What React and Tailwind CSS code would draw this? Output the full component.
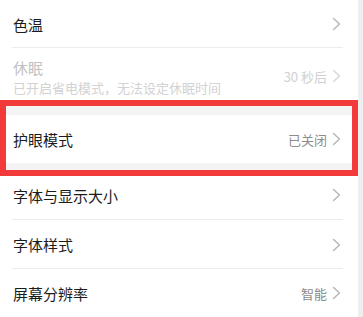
const font = { fontFamily: '"Noto Sans CJK SC", "Noto Sans", sans-serif' }

function Chevron({ light }) {
  return (
    <svg width="9" height="14" viewBox="0 0 9 14" className="shrink-0">
      <path
        d="M1.5 1.5 L7.5 7 L1.5 12.5"
        fill="none"
        stroke={light ? '#d6d6d6' : '#b5b5b5'}
        strokeWidth="1.4"
        strokeLinecap="round"
        strokeLinejoin="round"
      />
    </svg>
  )
}

function Row({ title, value, className = '', divider = true, inset = false }) {
  return (
    <div
      className={`relative flex items-center justify-between ${
        inset ? 'pl-[7px] pr-[11px]' : 'pl-[13px] pr-[17px]'
      } ${className}`}
    >
      <span className="text-[15px] text-[#1c1c1c] leading-none">{title}</span>
      <div className="flex items-center gap-[5px]">
        {value && <span className="text-[13px] text-[#8c8c8c] leading-none">{value}</span>}
        <Chevron />
      </div>
      {divider && <div className="absolute bottom-0 left-[12px] right-[15px] h-px bg-[#ececec]"></div>}
    </div>
  )
}

export default function App() {
  return (
    <div className="flex w-[363px] h-[317px] overflow-hidden bg-white" style={font}>
      <div className="w-[358px] flex flex-col">
        <Row title="色温" className="h-[48px]" />

        <div className="flex items-center justify-between pl-[13px] pr-[17px] h-[52px]">
          <div className="flex flex-col">
            <span className="text-[15px] text-[#c2c2c2] leading-none mt-[6px]">休眠</span>
            <span className="text-[13px] text-[#d2d2d2] leading-none mt-[6px]">已开启省电模式，无法设定休眠时间</span>
          </div>
          <div className="flex items-center gap-[5px] mt-[4px]">
            <span className="text-[13px] text-[#d0d0d0] leading-none">30 秒后</span>
            <Chevron light />
          </div>
        </div>

        <div className="border-[6px] border-[#f23a3a] bg-[#f3f3f3] pt-[9px] pb-[7px]">
          <Row title="护眼模式" value="已关闭" className="h-[48px] bg-white" divider={false} inset />
        </div>

        <Row title="字体与显示大小" className="h-[44px] pb-[6px]" />
        <Row title="字体样式" className="h-[49px]" />
        <Row title="屏幕分辨率" value="智能" className="h-[48px]" divider={false} />
      </div>
      <div className="flex-1 bg-[#efefef]"></div>
    </div>
  )
}
